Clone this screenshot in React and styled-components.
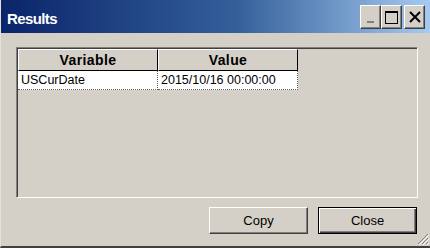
import React from 'react'
import styled, { createGlobalStyle } from 'styled-components'

const GlobalStyle = createGlobalStyle`
  html, body {
    margin: 0;
    padding: 0;
    background: #d4d0c8;
  }
  body {
    font-family: "Liberation Sans", Arial, sans-serif;
  }
`

const Window = styled.div`
  width: 430px;
  height: 248px;
  box-sizing: border-box;
  display: flex;
  flex-direction: column;
  background: #d4d0c8;
  border-left: 1px solid #e4e0d8;
  border-bottom: 2px solid #404040;
  position: relative;
  overflow: hidden;
`

const TitleBar = styled.div`
  height: 33px;
  flex-shrink: 0;
  display: flex;
  align-items: center;
  padding: 0 5px 0 6px;
  background: linear-gradient(to right, #0a246a 0%, #34609a 55%, #a6caf0 100%);
`

const Title = styled.div`
  flex: 1;
  color: #ffffff;
  font-weight: bold;
  font-size: 15px;
  letter-spacing: -0.6px;
  padding-top: 3px;
`

const TitleButtons = styled.div`
  display: flex;
  align-items: center;
`

const TitleButton = styled.div`
  width: 21px;
  height: 24px;
  box-sizing: border-box;
  background: #d4d0c8;
  border-top: 1px solid #ffffff;
  border-left: 1px solid #ffffff;
  border-right: 1px solid #404040;
  border-bottom: 1px solid #404040;
  box-shadow: inset -1px -1px 0 #808080;
  display: flex;
  align-items: center;
  justify-content: center;
  margin-left: ${p => (p.$gap ? '2px' : '0')};
  margin-top: 1px;
`

const Body = styled.div`
  flex: 1;
  display: flex;
  flex-direction: column;
  padding: 14px 11px 0 15px;
`

const Frame = styled.div`
  width: 402px;
  height: 151px;
  box-sizing: border-box;
  border-top: 1px solid #808080;
  border-left: 1px solid #808080;
  border-right: 1px solid #ffffff;
  border-bottom: 1px solid #ffffff;
  box-shadow: inset 1px 1px 0 #404040;
  padding: 1px 0 0 1px;
`

const Grid = styled.div`
  display: grid;
  grid-template-columns: 140px 140px;
`

const HeaderCell = styled.div`
  height: 22px;
  box-sizing: border-box;
  background: #d4d0c8;
  border-top: 1px solid #ffffff;
  border-left: 1px solid #ffffff;
  border-right: 1px solid #000000;
  border-bottom: 1px solid #000000;
  display: flex;
  align-items: center;
  justify-content: center;
  font-weight: bold;
  font-size: 14px;
  letter-spacing: 0.4px;
  color: #000;
`

const Cell = styled.div`
  height: 19px;
  box-sizing: border-box;
  background: #ffffff;
  border-right: 1px dotted #606060;
  border-bottom: 1px dotted #606060;
  padding-left: 3px;
  display: flex;
  align-items: center;
  font-size: 12.5px;
  color: #000;
  white-space: nowrap;
`

const ButtonRow = styled.div`
  display: flex;
  justify-content: flex-end;
  gap: 10px;
  padding: 9px 2px 0 0;
`

const Button = styled.div`
  width: 99px;
  height: 27px;
  box-sizing: border-box;
  background: #d4d0c8;
  border-top: 1px solid #ffffff;
  border-left: 1px solid #ffffff;
  border-right: 1px solid #404040;
  border-bottom: 1px solid #404040;
  box-shadow: inset -1px -1px 0 #808080;
  display: flex;
  align-items: center;
  justify-content: center;
  font-size: 13px;
  color: #000;
  ${p =>
    p.$default &&
    `
    border: 1px solid #000000;
    box-shadow: inset 1px 1px 0 #ffffff, inset -1px -1px 0 #404040, inset -2px -2px 0 #808080;
  `}
`

const Grip = styled.svg`
  position: absolute;
  right: 1px;
  bottom: 1px;
`

export default function App() {
  return (
    <Window>
      <GlobalStyle />
      <TitleBar>
        <Title>Results</Title>
        <TitleButtons>
          <TitleButton>
            <svg width="9" height="16" viewBox="0 0 9 16">
              <rect x="1" y="12" width="7" height="2" fill="#808080" />
            </svg>
          </TitleButton>
          <TitleButton>
            <svg width="13" height="13" viewBox="0 0 13 13">
              <rect x="0.5" y="0.5" width="12" height="12" fill="none" stroke="#000" />
              <rect x="0" y="0" width="13" height="2" fill="#000" />
            </svg>
          </TitleButton>
          <TitleButton $gap>
            <svg width="12" height="12" viewBox="0 0 12 12">
              <path d="M1 1 L11 11 M11 1 L1 11" stroke="#000" strokeWidth="2" />
            </svg>
          </TitleButton>
        </TitleButtons>
      </TitleBar>
      <Body>
        <Frame>
          <Grid>
            <HeaderCell>Variable</HeaderCell>
            <HeaderCell>Value</HeaderCell>
            <Cell>USCurDate</Cell>
            <Cell>2015/10/16 00:00:00</Cell>
          </Grid>
        </Frame>
        <ButtonRow>
          <Button>Copy</Button>
          <Button $default>Close</Button>
        </ButtonRow>
      </Body>
      <Grip width="12" height="12" viewBox="0 0 12 12">
        <path d="M11 1 L1 11 M11 5 L5 11 M11 9 L9 11" stroke="#808080" strokeWidth="1" />
        <path d="M12 2 L2 12 M12 6 L6 12 M12 10 L10 12" stroke="#ffffff" strokeWidth="1" />
      </Grip>
    </Window>
  )
}
